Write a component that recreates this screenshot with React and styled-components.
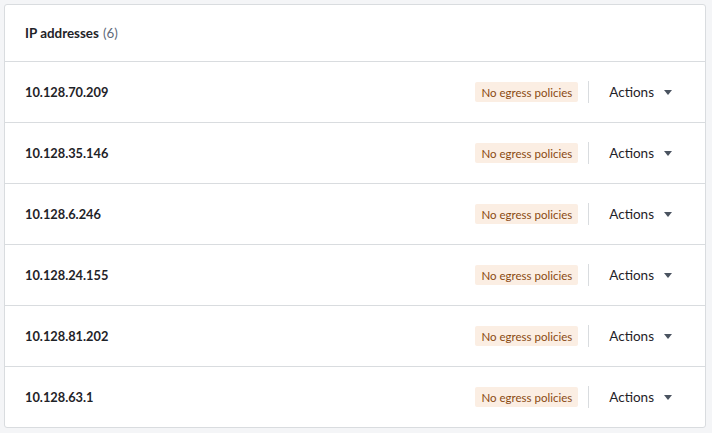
import React from 'react'
import styled, { createGlobalStyle } from 'styled-components'

const GlobalStyle = createGlobalStyle`
  html, body {
    margin: 0;
    padding: 0;
    background: #f4f5f7;
  }
  body {
    font-family: Lato, "Open Sans", sans-serif;
    color: #1f2328;
  }
`

const Page = styled.div`
  padding: 4px 6px 5px 4px;
`

const Card = styled.div`
  background: #fff;
  border: 1px solid #d9dcdf;
  border-radius: 3px;
`

const Header = styled.div`
  height: 56px;
  display: flex;
  align-items: center;
  padding: 0 20px;
  border-bottom: 1px solid #d9dcdf;
  font-size: 13.4px;
  font-weight: 700;
`

const Count = styled.span`
  color: #5f6b7a;
  font-weight: 400;
  margin-left: 4px;
`

const Row = styled.div`
  height: 60px;
  display: flex;
  align-items: center;
  padding: 0 33px 0 20px;
  border-bottom: ${({ $last }) => ($last ? 'none' : '1px solid #d9dcdf')};
`

const Address = styled.div`
  flex: 1;
  font-size: 12.8px;
  font-weight: 700;
`

const Badge = styled.span`
  display: inline-flex;
  align-items: center;
  height: 20px;
  padding: 0 6px;
  border-radius: 2px;
  background: #fbeee3;
  color: #8a4a12;
  font-size: 11.5px;
`

const Divider = styled.span`
  width: 1px;
  height: 22px;
  background: #d9dcdf;
  margin: 0 20px 0 10px;
`

const ActionsButton = styled.button`
  display: flex;
  align-items: center;
  gap: 10px;
  border: none;
  background: none;
  padding: 0;
  font-family: inherit;
  font-size: 13.5px;
  color: #1f2328;
  cursor: pointer;
`

const Caret = () => (
  <svg width="8" height="5" viewBox="0 0 8 5">
    <path d="M0 0h8L4 5z" fill="#4a5360" />
  </svg>
)

const ips = [
  '10.128.70.209',
  '10.128.35.146',
  '10.128.6.246',
  '10.128.24.155',
  '10.128.81.202',
  '10.128.63.1',
]

export default function App() {
  return (
    <>
      <GlobalStyle />
      <Page>
        <Card>
          <Header>
            IP addresses<Count>(6)</Count>
          </Header>
          {ips.map((ip, i) => (
            <Row key={ip} $last={i === ips.length - 1}>
              <Address>{ip}</Address>
              <Badge>No egress policies</Badge>
              <Divider />
              <ActionsButton>
                Actions
                <Caret />
              </ActionsButton>
            </Row>
          ))}
        </Card>
      </Page>
    </>
  )
}
